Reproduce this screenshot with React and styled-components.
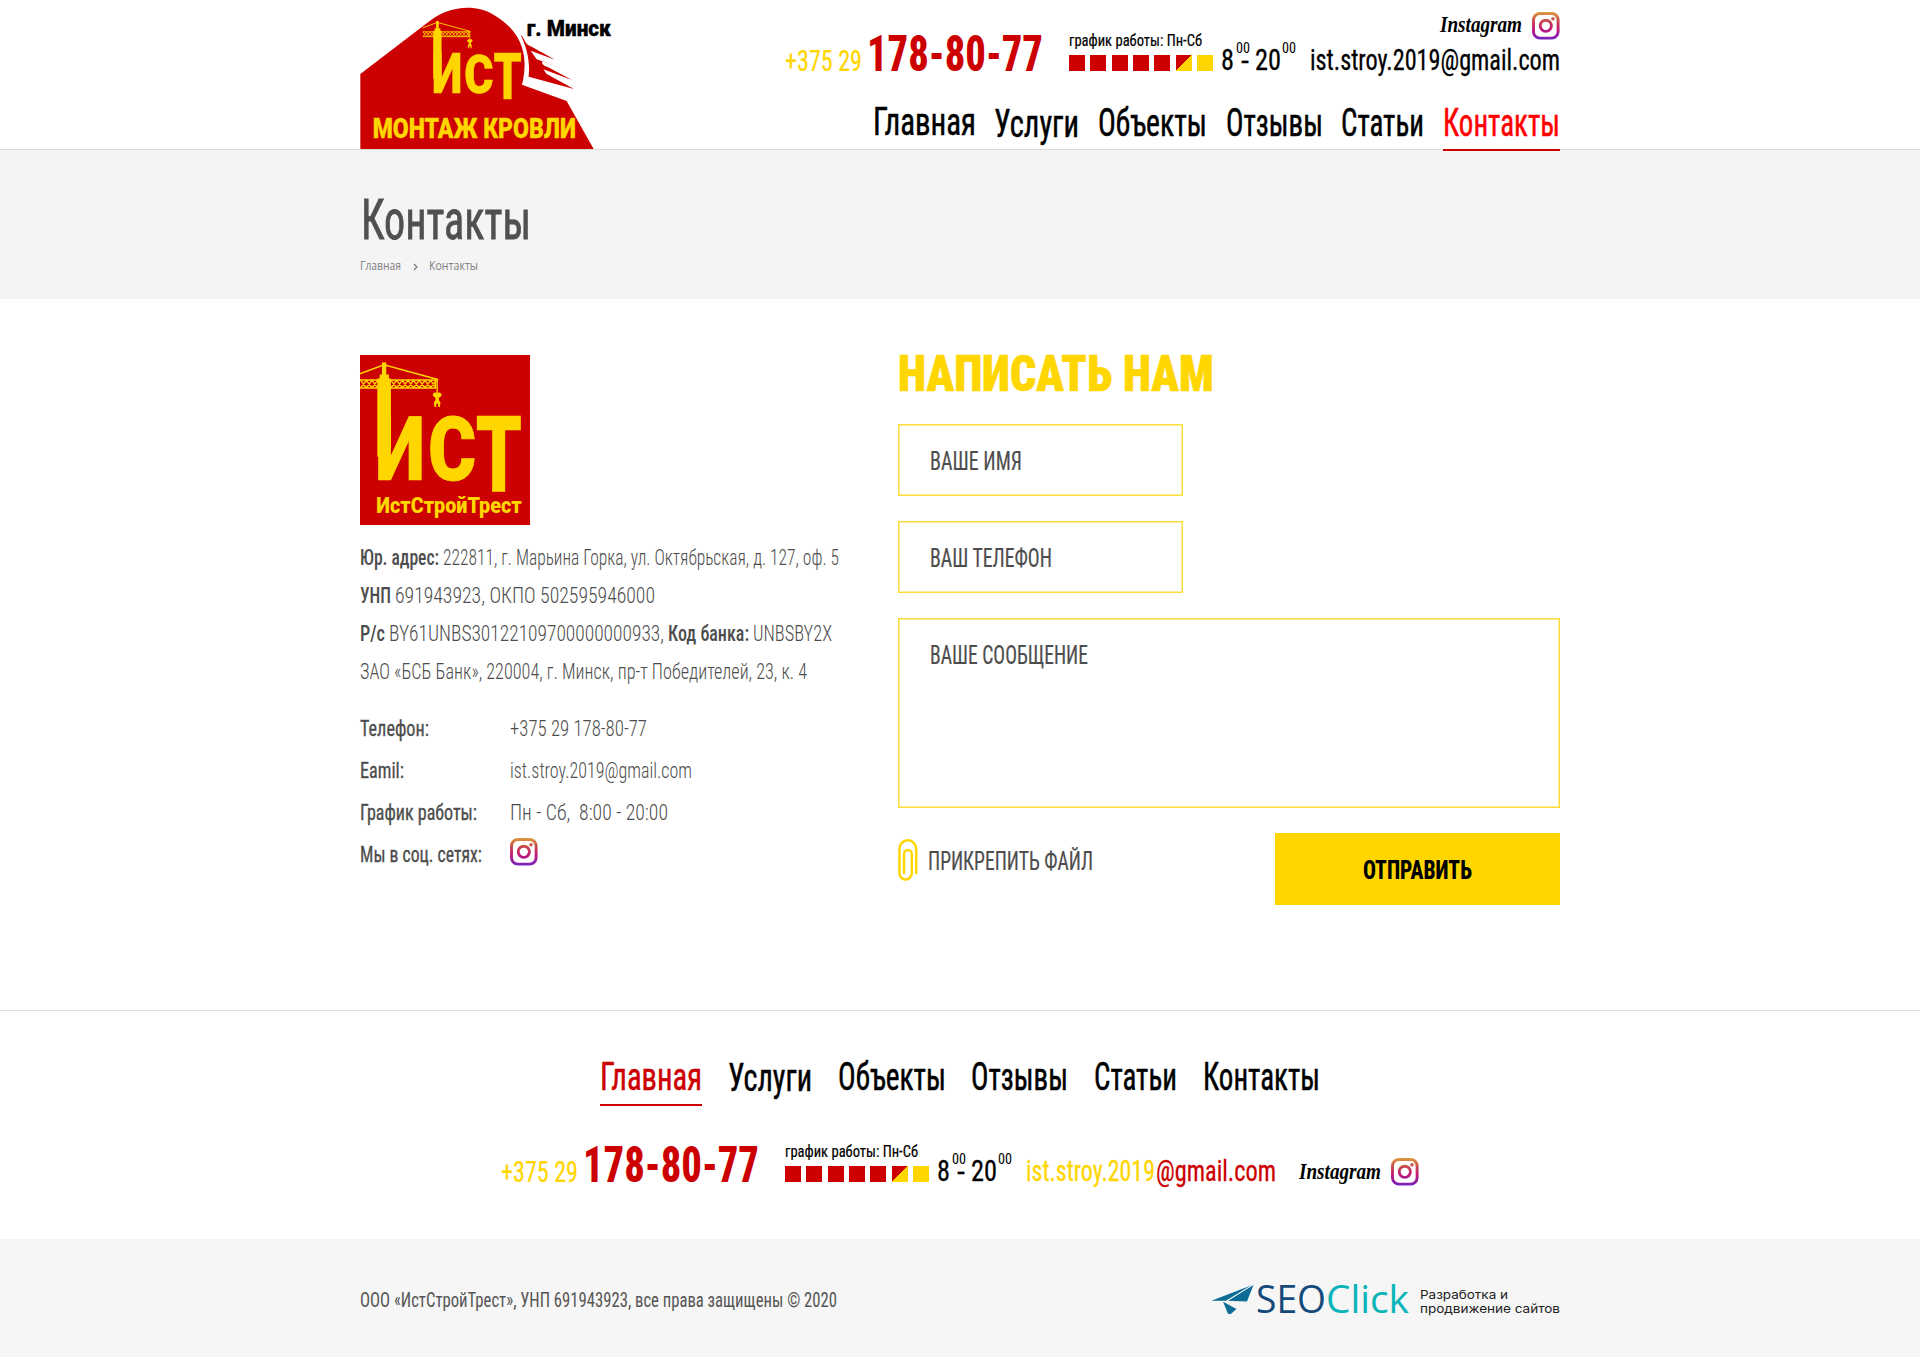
import React, { useLayoutEffect, useRef, useState } from "react";
import styled, { createGlobalStyle } from "styled-components";

const RED = "#cc0000";
const YELLOW = "#ffd600";
const GREY = "#4d4d4d";
const CONDENSED = `Roboto, "Open Sans", sans-serif`;

const Global = createGlobalStyle`
  *, *::before, *::after { box-sizing: border-box; }
  body { margin: 0; background: #fff; color: #000; font-family: ${CONDENSED}; }
  h1, h2, p { margin: 0; font-weight: inherit; }
  a { color: inherit; text-decoration: none; }
  svg { display: block; }
`;

/* ---------- text condensed to a given measure ---------- */

const Measure = styled.span`
  display: block;
  flex: none;
  width: ${(p) => p.$w}px;
  height: ${(p) => p.$h}px;
  margin: ${(p) => p.$m || "0"};
  line-height: ${(p) => p.$h}px;
  font-family: ${(p) => p.$family || CONDENSED};
  font-size: ${(p) => p.$s}px;
  font-weight: ${(p) => p.$weight || 400};
  font-style: ${(p) => (p.$italic ? "italic" : "normal")};
  font-stretch: ${(p) => (p.$family ? "normal" : "75%")};
  color: ${(p) => p.$c || "inherit"};
  -webkit-text-stroke: ${(p) => p.$stroke || 0}px currentColor;
`;

const Inner = styled.span`
  display: inline-block;
  white-space: pre;
  transform-origin: 0 50%;
`;

function Fit({ children, w, h, s, c, m, weight, stroke, family, italic, as }) {
  const ref = useRef(null);
  const [scale, setScale] = useState(1);
  useLayoutEffect(() => {
    ref.current.style.transform = "none";
    const k = w / ref.current.getBoundingClientRect().width;
    ref.current.style.transform = `scaleX(${k})`;
    setScale(k);
  }, [w, s, children]);
  return (
    <Measure as={as} $w={w} $h={h} $s={s} $c={c} $m={m} $weight={weight} $stroke={stroke} $family={family} $italic={italic}>
      <Inner ref={ref} style={{ transform: `scaleX(${scale})` }}>{children}</Inner>
    </Measure>
  );
}

/* ---------- drawings ---------- */

const SvgText = styled.text`
  font-family: ${CONDENSED};
  font-weight: 900;
  font-size: ${(p) => p.$s}px;
  fill: ${(p) => p.$c || YELLOW};
  stroke: ${(p) => p.$c || YELLOW};
  stroke-width: ${(p) => p.$sw || 0};
  stroke-linejoin: miter;
`;

function Truss({ from, to }) {
  const cells = [];
  for (let x = from; x < to - 4; x += 17) {
    cells.push(`M${x} 631L${x + 17} 653M${x} 653L${x + 17} 631`);
  }
  return <path d={cells.join("")} stroke={YELLOW} strokeWidth="4" fill="none" />;
}

function Mark() {
  return (
    <g>
      <path d="M96 577H109V613H117V625H123V860H82V625H89V613H96Z" fill={YELLOW} />
      <path d="M30 611L102 584L264 628" stroke={YELLOW} strokeWidth="4.5" fill="none" />
      <path d="M30 630H90M115 630H265M30 654H90M115 654H258M257 628V656" stroke={YELLOW} strokeWidth="4.5" fill="none" />
      <Truss from={32} to={82} />
      <Truss from={123} to={258} />
      <path d="M262 628V668" stroke={YELLOW} strokeWidth="4" />
      <path d="M254 667H270L275 672V677L267 684V690L272 698L270 711H265V703L262 699L259 703V711H254L252 698L257 690V684L249 677V672Z" fill={YELLOW} />
      <SvgText x="76" y="930" $s="270" $sw="2" textLength="149" lengthAdjust="spacingAndGlyphs">И</SvgText>
      <SvgText x="235" y="930" $s="268" $sw="3" textLength="144" lengthAdjust="spacingAndGlyphs">С</SvgText>
      <SvgText x="378" y="963" $s="316" $sw="2" textLength="139" lengthAdjust="spacingAndGlyphs">Т</SvgText>
    </g>
  );
}

const HeaderLogoSvg = styled.svg`
  flex: none;
  width: 252px;
  height: 149px;
  overflow: visible;
`;

function HeaderLogo() {
  return (
    <HeaderLogoSvg viewBox="30 0 756 447">
      <path d="M31 222L235 66C295 18 375 10 432 45C478 73 505 105 517 146C527 180 525 218 516 254L650 303L731 447H31Z" fill={RED} />
      <path d="M512 104C528 118 520 130 545 140L615 179L542 152L560 178L643 208L578 184C570 194 590 200 603 206L666 240L580 208L590 222L672 267L536 230C540 190 534 150 512 104Z" fill={RED} />
      <g transform="translate(199.7 -289) scale(0.61)"><Mark /></g>
      <SvgText x="530" y="108" $s="68" $c="#000" $sw="1" textLength="253" lengthAdjust="spacingAndGlyphs">г. Минск</SvgText>
      <SvgText x="68" y="415" $s="81" $sw="1" textLength="610" lengthAdjust="spacingAndGlyphs">МОНТАЖ КРОВЛИ</SvgText>
    </HeaderLogoSvg>
  );
}

const SquareLogoSvg = styled.svg`
  width: 170px;
  height: 170px;
  background: ${RED};
  overflow: visible;
`;

function SquareLogo() {
  return (
    <SquareLogoSvg viewBox="30 555 511 510">
      <Mark />
      <SvgText x="79" y="1028" $s="67" textLength="437" lengthAdjust="spacingAndGlyphs">ИстСтройТрест</SvgText>
    </SquareLogoSvg>
  );
}

const IgSvg = styled.svg`
  flex: none;
  width: 28px;
  height: 28px;
  margin: ${(p) => p.$m || "0"};
`;

function InstagramIcon({ id, m }) {
  return (
    <IgSvg viewBox="0 0 28 28" $m={m}>
      <defs>
        <linearGradient id={id} gradientUnits="userSpaceOnUse" x1="0" y1="0" x2="0" y2="28">
          <stop offset="0" stopColor="#e09b3d" />
          <stop offset=".3" stopColor="#c74c4d" />
          <stop offset=".6" stopColor="#c21975" />
          <stop offset="1" stopColor="#7024c4" />
        </linearGradient>
      </defs>
      <g fill="none" stroke={`url(#${id})`} strokeWidth="2.9">
        <rect x="1.5" y="1.5" width="24.6" height="24.6" rx="6.4" />
        <circle cx="13.8" cy="13.8" r="5.6" />
      </g>
      <circle cx="21" cy="6.7" r="1.8" fill={`url(#${id})`} />
    </IgSvg>
  );
}

const ClipSvg = styled.svg`
  width: 20px;
  height: 42px;
  margin-top: 6px;
`;

const PlaneSvg = styled.svg`
  flex: none;
  width: 43px;
  height: 31px;
  margin-top: 14px;
`;

/* ---------- shared contact strip ---------- */

const Strip = styled.div`
  display: flex;
  align-items: flex-start;
  height: 50px;
`;

const Schedule = styled.div`
  margin-left: 26px;
  padding-top: 2px;
`;

const Days = styled.div`
  display: flex;
  justify-content: space-between;
  width: 144px;
  margin-top: 7px;
`;

const Day = styled.span`
  width: 16px;
  height: 16px;
  background: ${(p) =>
    p.$kind === "half"
      ? `linear-gradient(135deg, ${RED} 50%, ${YELLOW} 50%)`
      : p.$kind === "off" ? YELLOW : RED};
`;

const WEEK = ["on", "on", "on", "on", "on", "half", "off"];

function ContactStrip() {
  return (
    <Strip>
      <Fit w={77} h={22} s={29.5} c={YELLOW} stroke={0.2} m="20px 0 0">+375 29</Fit>
      <Fit w={176} h={36} s={49.5} c={RED} weight={800} m="6px 0 0 5px">178-80-77</Fit>
      <Schedule>
        <Fit w={133} h={16} s={17} stroke={0.2}>график работы: Пн-Сб</Fit>
        <Days>{WEEK.map((kind, i) => <Day key={i} $kind={kind} />)}</Days>
      </Schedule>
      <Fit w={13} h={22} s={29.5} stroke={0.3} m="19px 0 0 8px">8</Fit>
      <Fit w={14} h={10} s={14} m="13px 0 0 2px">00</Fit>
      <Fit w={8} h={22} s={29.5} stroke={0.3} m="20px 0 0 -9px">-</Fit>
      <Fit w={26} h={22} s={29.5} stroke={0.3} m="19px 0 0 6px">20</Fit>
      <Fit w={14} h={10} s={14} m="13px 0 0 1px">00</Fit>
    </Strip>
  );
}

function InstagramWord({ m }) {
  return (
    <Fit w={82} h={24} s={24} weight={700} italic family={`"Liberation Serif", serif`} m={m}>Instagram</Fit>
  );
}

/* ---------- header ---------- */

const Container = styled.div`
  width: 1200px;
  margin: 0 auto;
`;

const Header = styled.header`
  height: 150px;
  border-bottom: 1px solid #dcdcdc;
`;

const HeaderInner = styled(Container)`
  display: flex;
  justify-content: space-between;
`;

const HeaderSide = styled.div`
  display: flex;
  flex-direction: column;
  align-items: flex-end;
`;

const HeaderTop = styled.div`
  display: flex;
  height: 100px;
  padding-top: 12px;
`;

const StripSlot = styled.div`
  padding-top: 18px;
  margin-right: 14px;
`;

const MailColumn = styled.div`
  display: flex;
  flex-direction: column;
  align-items: flex-end;
`;

const Social = styled.div`
  display: flex;
`;

const Nav = styled.nav`
  display: flex;
  gap: ${(p) => p.$gap}px;
`;

const NavItem = styled.a`
  display: block;
  height: ${(p) => p.$h}px;
  padding-top: ${(p) => p.$top || 0}px;
  color: ${(p) => p.$c || "#000"};
  border-bottom: 2px solid ${(p) => (p.$line ? RED : "transparent")};
`;

const HEADER_NAV = [
  ["Главная", 103, 6], ["Услуги", 85, 8], ["Объекты", 109, 7],
  ["Отзывы", 97, 7], ["Статьи", 83, 7], ["Контакты", 117, 7],
];

const FOOTER_NAV = [
  ["Главная", 102, 1], ["Услуги", 84, 2], ["Объекты", 108, 1],
  ["Отзывы", 97, 1], ["Статьи", 83, 1], ["Контакты", 117, 1],
];

/* ---------- title band ---------- */

const Band = styled.section`
  height: 149px;
  background: #f4f4f4;
  padding-top: 50px;
`;

const Crumbs = styled.div`
  display: flex;
  align-items: center;
  margin-top: 16px;
`;

const Chevron = styled.svg`
  width: 5px;
  height: 8px;
  margin: 1px 11px 0 12px;
`;

/* ---------- content ---------- */

const Content = styled(Container)`
  display: flex;
  justify-content: space-between;
  height: 711px;
  padding-top: 56px;
`;

const About = styled.section`
  width: 500px;
`;

const Requisites = styled.div`
  padding-top: 14px;
  color: ${GREY};
`;

const Line = styled.p`
  display: flex;
  gap: 4px;
  height: 38px;
`;

const ContactRow = styled.div`
  display: grid;
  grid-template-columns: 150px auto;
  height: 42px;
  color: ${GREY};
`;

const ContactList = styled.div`
  padding-top: 17px;
`;

const FormSide = styled.form`
  width: 662px;
`;

const Field = styled.label`
  display: block;
  width: ${(p) => p.$w}px;
  height: ${(p) => p.$h}px;
  margin-bottom: ${(p) => p.$mb}px;
  padding: 24px 0 0 31px;
  border: 1px solid #fbdc3a;
  box-shadow: inset 0 0 0 0.5px #fbdc3a;
  color: ${GREY};
`;

const FormFooter = styled.div`
  display: flex;
  justify-content: space-between;
`;

const Attach = styled.div`
  display: flex;
  color: ${GREY};
`;

const Submit = styled.button`
  display: flex;
  justify-content: center;
  align-items: center;
  width: 285px;
  height: 72px;
  padding: 3px 0 0;
  border: 0;
  background: ${YELLOW};
  color: #000;
`;

/* ---------- footer ---------- */

const Footer = styled.footer`
  border-top: 1px solid #dcdcdc;
`;

const FooterMain = styled.div`
  display: flex;
  flex-direction: column;
  align-items: center;
  height: 228px;
  padding-top: 48px;
`;

const FooterStrip = styled.div`
  display: flex;
  margin-top: 35px;
`;

const FooterBottom = styled.div`
  height: 118px;
  background: #f6f6f6;
  padding-top: 31px;
`;

const FooterRow = styled(Container)`
  display: flex;
  justify-content: space-between;
`;

const Maker = styled.a`
  display: flex;
`;

const MakerNote = styled.div`
  padding: 18px 0 0 11px;
`;

const SEGOE = `"Open Sans", "Noto Sans", sans-serif`;
const GEOMETRIC = `Inter, "Open Sans", sans-serif`;

const REQUISITES = [
  [["Юр. адрес:", 79, true], ["222811, г. Марьина Горка, ул. Октябрьская, д. 127, оф. 5", 396]],
  [["УНП", 31, true], ["691943923, ОКПО 502595946000", 260]],
  [["Р/с", 25, true], ["BY61UNBS30122109700000000933,", 275], ["Код банка:", 81, true], ["UNBSBY2X", 79]],
  [["ЗАО «БСБ Банк», 220004, г. Минск, пр-т Победителей, 23, к. 4", 447]],
];

const CONTACTS = [
  ["Телефон:", 69, "+375 29 178-80-77", 137],
  ["Eamil:", 44, "ist.stroy.2019@gmail.com", 182],
  ["График работы:", 117, "Пн - Сб,  8:00 - 20:00", 158],
];

export default function App() {
  return (
    <>
      <Global />
      <Header>
        <HeaderInner>
          <HeaderLogo />
          <HeaderSide>
            <HeaderTop>
              <StripSlot><ContactStrip /></StripSlot>
              <MailColumn>
                <Social>
                  <InstagramWord m="0 10px 0 0" />
                  <InstagramIcon id="ig-top" />
                </Social>
                <Fit w={250} h={22} s={29.5} stroke={0.3} m="9px 0 0">ist.stroy.2019@gmail.com</Fit>
              </MailColumn>
            </HeaderTop>
            <Nav $gap={18.7}>
              {HEADER_NAV.map(([text, w, top], i) => (
                <NavItem key={text} href="#" $h={51} $top={top} $c={i === 5 && "#ff0000"} $line={i === 5}>
                  <Fit w={w} h={32} s={38} stroke={0.5}>{text}</Fit>
                </NavItem>
              ))}
            </Nav>
          </HeaderSide>
        </HeaderInner>
      </Header>

      <Band>
        <Container>
          <Fit as="h1" w={170} h={41} s={55} stroke={0.8} c="#505050" m="0 0 0 1px">Контакты</Fit>
          <Crumbs>
            <Fit w={41} h={18} s={12} c="#808080" family={SEGOE}>Главная</Fit>
            <Chevron viewBox="0 0 5 8"><path d="M1 1L4 4L1 7" fill="none" stroke="#777" strokeWidth="1.2" /></Chevron>
            <Fit w={49} h={18} s={12} c="#808080" family={SEGOE}>Контакты</Fit>
          </Crumbs>
        </Container>
      </Band>

      <Content as="main">
        <About>
          <SquareLogo />
          <Requisites>
            {REQUISITES.map((parts, i) => (
              <Line key={i}>
                {parts.map(([text, w, strong]) => (
                  <Fit key={text} w={w} h={38} s={21.5} weight={strong ? 500 : 300}>{text}</Fit>
                ))}
              </Line>
            ))}
          </Requisites>
          <ContactList>
            {CONTACTS.map(([label, lw, value, vw]) => (
              <ContactRow key={label}>
                <Fit w={lw} h={42} s={21.5} stroke={0.3}>{label}</Fit>
                <Fit w={vw} h={42} s={21.5} weight={300}>{value}</Fit>
              </ContactRow>
            ))}
            <ContactRow>
              <Fit w={122} h={42} s={21.5} stroke={0.3}>Мы в соц. сетях:</Fit>
              <InstagramIcon id="ig-main" m="4px 0 0" />
            </ContactRow>
          </ContactList>
        </About>

        <FormSide>
          <Fit as="h2" w={316} h={36} s={50} weight={900} stroke={0.6} c={YELLOW} m="1px 0 32px">НАПИСАТЬ НАМ</Fit>
          <Field $w={285} $h={72} $mb={25}><Fit w={92} h={26} s={25} stroke={0.2}>ВАШЕ ИМЯ</Fit></Field>
          <Field $w={285} $h={72} $mb={25}><Fit w={122} h={26} s={25} stroke={0.2}>ВАШ ТЕЛЕФОН</Fit></Field>
          <Field $w={662} $h={190} $mb={25}><Fit w={158} h={26} s={25} stroke={0.2}>ВАШЕ СООБЩЕНИЕ</Fit></Field>
          <FormFooter>
            <Attach>
              <ClipSvg viewBox="0 0 20 42">
                <path d="M18.2 34V10A8.4 8.7 0 0 0 1.4 10V34A6.2 6.4 0 0 0 13.8 34V15A3.9 4 0 0 0 6 15V34" fill="none" stroke={YELLOW} strokeWidth="2.5" strokeLinecap="round" />
              </ClipSvg>
              <Fit w={165} h={26} s={25} stroke={0.2} m="16px 0 0 10px">ПРИКРЕПИТЬ ФАЙЛ</Fit>
            </Attach>
            <Submit type="button"><Fit w={109} h={26} s={25} weight={800}>ОТПРАВИТЬ</Fit></Submit>
          </FormFooter>
        </FormSide>
      </Content>

      <Footer>
        <FooterMain>
          <Nav $gap={25.7}>
            {FOOTER_NAV.map(([text, w, top], i) => (
              <NavItem key={text} href="#" $h={47} $top={top} $c={i === 0 && RED} $line={i === 0}>
                <Fit w={w} h={34} s={38} stroke={0.5}>{text}</Fit>
              </NavItem>
            ))}
          </Nav>
          <FooterStrip>
            <ContactStrip />
            <Fit w={129} h={22} s={29.5} stroke={0.3} c={YELLOW} m="19px 0 0 14px">ist.stroy.2019</Fit>
            <Fit w={120} h={22} s={29.5} stroke={0.3} c={RED} m="19px 0 0 1px">@gmail.com</Fit>
            <InstagramWord m="18px 10px 0 23px" />
            <InstagramIcon id="ig-foot" m="17px 0 0" />
          </FooterStrip>
        </FooterMain>
        <FooterBottom>
          <FooterRow>
            <Fit w={477} h={26} s={19.5} c="#555" m="18px 0 0">ООО «ИстСтройТрест», УНП 691943923, все права защищены © 2020</Fit>
            <Maker href="#">
              <PlaneSvg viewBox="0 0 128 92">
                <path d="M1 50L127 1L45 50Z" fill="#0d6c96" />
                <path d="M127 1L107 52L50 50Z" fill="#0d6c96" />
                <path d="M127 1L47 50" stroke="#f6f6f6" strokeWidth="3" />
                <path d="M36 53L76 74L58 90L50 88Z" fill="#0d6c96" />
              </PlaneSvg>
              <Fit w={70} h={40} s={39} c="#15497a" family={SEGOE} m="8px 0 0 2px">SEO</Fit>
              <Fit w={83} h={40} s={39} c="#0ab4b8" family={SEGOE} m="8px 0 0">Click</Fit>
              <MakerNote>
                <Fit w={88} h={14} s={12.3} family={GEOMETRIC} c="#222">Разработка и</Fit>
                <Fit w={140} h={14} s={12.3} family={GEOMETRIC} c="#222">продвижение сайтов</Fit>
              </MakerNote>
            </Maker>
          </FooterRow>
        </FooterBottom>
      </Footer>
    </>
  );
}
